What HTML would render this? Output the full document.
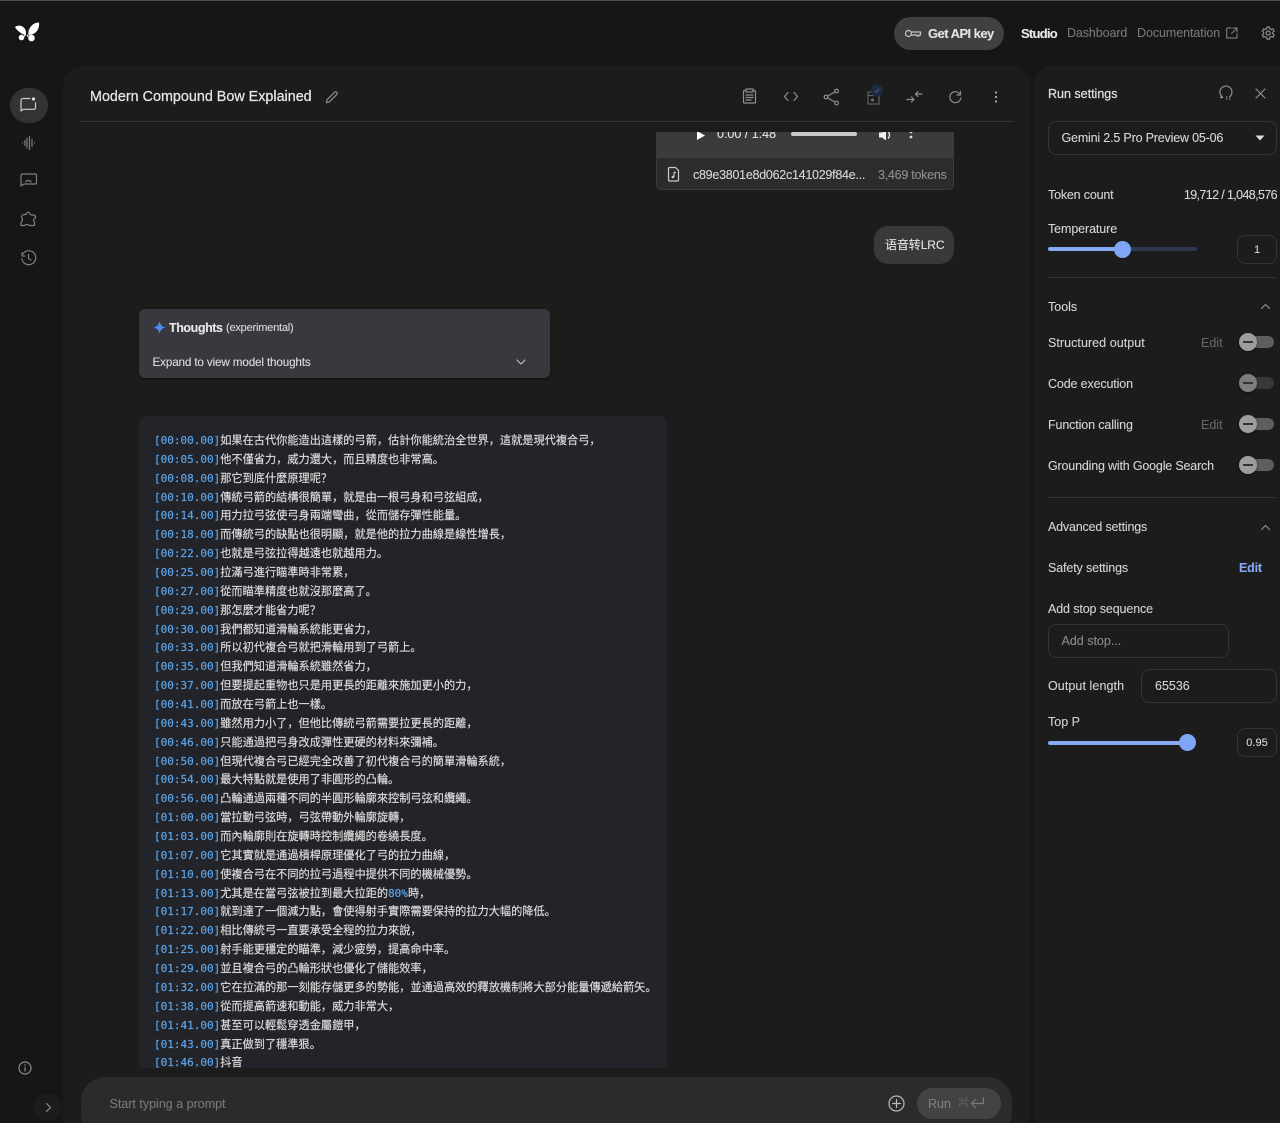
<!DOCTYPE html>
<html lang="zh"><head><meta charset="utf-8"><title>Modern Compound Bow Explained</title>
<style>
html,body{margin:0;padding:0;background:#161616;width:1280px;height:1123px;overflow:hidden}
#wrap{width:1280px;height:1123px;position:relative;overflow:hidden;font-family:"Liberation Sans","Noto Sans CJK SC",sans-serif;color:#d8d8d8;font-size:12.5px;-webkit-text-stroke:.1px}
.a{position:absolute}
.t{position:absolute;white-space:nowrap;line-height:16px}
svg{position:absolute;overflow:visible}
.i{fill:none;stroke:#8e8e8e;stroke-width:1.2;stroke-linecap:round;stroke-linejoin:round}
.box{position:absolute;box-sizing:border-box;border:1px solid #323335;border-radius:8px}
.tr{position:absolute;left:1240px;width:34px;height:12px;border-radius:6px;background:#5e5e5e}
.th{position:absolute;left:1239px;width:18px;height:18px;border-radius:50%;background:#9d9d9d;box-shadow:0 1px 2px rgba(0,0,0,.5)}
.th:after{content:"";position:absolute;left:4px;top:8px;width:10px;height:2px;background:#333}
#code{position:absolute;left:154px;top:431px;width:510px;font-size:11.2px;color:#dedede;font-family:"Noto Sans CJK SC",sans-serif;-webkit-text-stroke:.15px}
#code div{height:18.86px;line-height:18.86px;white-space:nowrap}
#code b{font-weight:400;font-size:11px;line-height:1;color:#5ca4ea;font-family:"DejaVu Sans Mono",monospace;-webkit-text-stroke:.2px}
</style></head><body><div id="wrap">
<div class="a" style="left:0;top:0;width:1280px;height:1px;background:#4a4a4a"></div>

<!-- logo -->
<svg style="left:0;top:0" width="60" height="60"><g fill="#fff">
<path d="M15 27c3-2.500 8-1.500 10 2 1 2 1.300 4 .8 6-3-.5-5.500-2-7.500-4-1.500-1.300-2.500-2.500-3.300-4z"/>
<path d="M39 22.500c.5 3.500-.5 7.500-3.500 10-2 1.700-4.500 2.500-7 2.500-.5-3.500.5-7 3.500-9.800 2-1.800 4.500-2.700 7-2.700z"/>
<circle cx="21.500" cy="37.500" r="2.800"/><circle cx="31.500" cy="38" r="3.300"/>
<path d="M25 33l-1.500 4 2-1zM28 34l.5 3-2-1z"/></g></svg>

<!-- sidebar -->
<div class="a" style="left:9.500px;top:88px;width:38px;height:35px;border-radius:18px;background:#333"></div>
<svg style="left:0;top:0" width="60" height="280">
<g class="i" style="stroke:#cfcfcf">
<path d="M30 98.500h-7a2 2 0 0 0-2 2v10.500l2.300-1.700h10.700a1.500 1.500 0 0 0 1.500-1.500v-5"/>
</g><circle cx="33.500" cy="99" r="1.600" fill="#ddd"/>
<g class="i" style="stroke:#7e7e7e" stroke-width="1.100"><path d="M22.500 143h0M25 140.500v5M27 138v10M29.500 136.500v13M32 139.500v7M34.500 143h0"/>
<path d="M22.500 174h13a1 1 0 0 1 1 1v8a1 1 0 0 1-1 1H24l-3 2v-10.500a1.500 1.500 0 0 1 1.500-1.500z"/>
<path d="M25.500 182l2-2 1.300 1.300 1-1 1.700 1.700" stroke-width="1"/>
<path d="M26 214.500h-1.500c-1.500 0-3 1-3 2.500s1.500 1.500 1 3-1.500 1.500-1.500 3v2.500h3c1.500 0 1.500-1 3-1s1.500 1 3 1h4.500v-3c0-1-1-1-1-2.500s1.500-1 2-2.500c.3-1.500-1-2.500-2-2.500h-2.500c-.8 0-.8-2.500-2.800-2.800-2-.2-1.700 2.300-2.700 2.300z"/>
<path d="M22.500 254.500a7 7 0 1 1-.7 4.300M22 253v3h3M28.500 254.500v4l2.500 1.500"/></g>
</svg>
<svg style="left:18px;top:1061px" width="14" height="14"><circle class="i" cx="7" cy="7" r="6"/><path class="i" d="M7 6.500v3.500M7 3.800v.6"/></svg>
<div class="a" style="left:34px;top:1093px;width:28px;height:28px;border-radius:50%;background:#1c1c1c"></div>
<svg style="left:44px;top:1102px" width="10" height="12"><path class="i" d="M2.500 1.500l4 4-4 4"/></svg>

<!-- header right -->
<div class="a" style="left:894px;top:17px;width:110px;height:33px;border-radius:17px;background:#404040"></div>
<svg style="left:905px;top:28px" width="16" height="12"><g class="i" stroke-width="1.100" style="stroke:#c8c8c8"><circle cx="3.500" cy="5.500" r="3"/><path d="M6.500 4h9v3h-1.500v1h-2v-1h-5.500"/></g></svg>
<div class="t" style="left:928px;top:26px;font-size:13px;font-weight:700;color:#e4e4e4;letter-spacing:-.55px">Get API key</div>
<div class="t" style="left:1021px;top:26px;font-size:13px;font-weight:700;color:#e8e8e8;letter-spacing:-.75px">Studio</div>
<div class="t" style="left:1067px;top:25px;font-size:12.500px;color:#767676;letter-spacing:-.1px">Dashboard</div>
<div class="t" style="left:1137px;top:25px;font-size:12.500px;color:#767676;letter-spacing:-.07px">Documentation</div>
<svg style="left:1226px;top:27px" width="12" height="12"><path class="i" style="stroke:#777" d="M5 1H1.500a.8.800 0 0 0-.8.800v8.400a.8.800 0 0 0 .8.800h8.700a.8.800 0 0 0 .8-.8V7M7 1h4v4M11 1L5.500 6.500"/></svg>
<svg style="left:1261px;top:26px" width="15" height="15"><g class="i" stroke="#999"><path d="M6 1h2.500l.4 1.800 1.300.7 1.800-.6 1.200 2.100-1.400 1.300v1.500l1.400 1.300-1.200 2.100-1.800-.6-1.300.7-.4 1.800H6l-.4-1.800-1.300-.7-1.800.6L1.300 9.100l1.400-1.300V6.300L1.300 5l1.200-2.100 1.800.6 1.300-.7z"/><circle cx="7.250" cy="7" r="2"/></g></svg>

<!-- main panel -->
<div class="a" style="left:63px;top:66px;width:967px;height:1070px;border-radius:20px 20px 0 0;background:#1c1c1c"></div>
<div class="t" style="left:90px;top:88px;font-size:14.35px;line-height:18px;color:#e6e6e6;-webkit-text-stroke:.25px #e6e6e6">Modern Compound Bow Explained</div>
<svg style="left:325px;top:90px" width="14" height="14"><path class="i" d="M1.500 12.700l.6-3 7.600-7.600c.5-.5 1.300-.5 1.800 0l.4.400c.5.500.5 1.300 0 1.800l-7.600 7.600z"/></svg>
<div class="a" style="left:80px;top:121px;width:934px;height:1px;background:#333"></div>

<!-- toolbar -->
<svg style="left:735px;top:85px" width="275" height="24"><g class="i" stroke-width="1.100">
<path d="M11 5.500H9.500a1 1 0 0 0-1 1v10.500a1 1 0 0 0 1 1h10a1 1 0 0 0 1-1V6.500a1 1 0 0 0-1-1H18M11 4h7v3h-7zM11 10h7M11 12.500h7M11 15h5"/>
<path d="M53 7.500L49.500 11.500 53 15.500M59 7.500l3.500 4-3.500 4"/>
<circle cx="101.500" cy="6" r="1.800"/><circle cx="91" cy="12" r="1.800"/><circle cx="101.500" cy="18" r="1.800"/><path d="M92.800 11l7-4M92.800 13l7 4"/>
<path style="stroke:#5e5e5e" d="M138 7h-5v12h11v-9"/><path style="stroke:#5e5e5e" d="M133 10.500h5"/>
</g><circle cx="137.500" cy="15" r="1.500" fill="#707070"/>
<circle cx="142" cy="5.500" r="6" fill="#1e2a42"/><path d="M139.500 5.500l1.800 1.800 3-3.300" fill="none" stroke="#526079" stroke-width="1"/>
<g class="i" stroke-width="1.100"><path d="M172 14.500h7M176.500 12l2.500 2.500-2.500 2.500M187 9h-6.500M183 6.500L180.500 9l2.500 2.500"/>
<path d="M225 9.200a5.500 5.500 0 1 0 .8 3.800M225.500 6.500v3.500h-3.500"/></g>
<g fill="#aaa"><circle cx="261" cy="7.500" r="1.100"/><circle cx="261" cy="12" r="1.100"/><circle cx="261" cy="16.500" r="1.100"/></g></svg>

<!-- audio card -->
<div class="a" style="left:656px;top:132px;width:298px;height:58px;overflow:hidden;box-sizing:border-box;border:1px solid #3a3b3d;border-top:0;border-radius:0 0 5px 5px;background:#2b2c2e">
<div class="a" style="left:0;top:0;width:298px;height:26px;background:#3b3b3d"></div>
<svg style="left:39px;top:-2px" width="12" height="12"><path d="M1 1l8 4.500-8 4.500z" fill="#fff"/></svg>
<div class="t" style="left:60px;top:-6px;font-size:12.500px;color:#e4e4e4">0:00 / 1:48</div>
<div class="a" style="left:134px;top:0;width:66px;height:4px;border-radius:2px;background:#c9c9c9"></div>
<svg style="left:221px;top:-3px" width="14" height="14"><path d="M1 3.500h3l4-3v11l-4-3H1z" fill="#eee"/><path d="M10 2.500c2 2 2 5 0 7" fill="none" stroke="#eee" stroke-width="1.300"/></svg>
<svg style="left:251px;top:-2px" width="6" height="14"><g fill="#ddd"><circle cx="3" cy="2" r="1.400"/><circle cx="3" cy="7" r="1.400"/></g></svg>
<svg style="left:10px;top:34px" width="14" height="16"><path class="i" style="stroke:#ccc" d="M1.500 2.500a1 1 0 0 1 1-1h6l3 3v9.500a1 1 0 0 1-1 1h-8a1 1 0 0 1-1-1z"/><path d="M7 6v5M7 6l2 .8" fill="none" stroke="#ccc" stroke-width="1.100"/><circle cx="5.800" cy="11" r="1.300" fill="#ccc"/></svg>
<div class="t" style="left:36px;top:35px;font-size:12.500px;color:#d9d9d9;letter-spacing:-.26px">c89e3801e8d062c141029f84e...</div>
<div class="t" style="left:221px;top:35px;font-size:12.500px;color:#8f8f8f;letter-spacing:-.25px">3,469 tokens</div>
</div>

<!-- bubble -->
<div class="a" style="left:874px;top:226px;width:80px;height:38px;border-radius:14px;background:#38393a"></div>
<div class="t" style="left:885px;top:237px;font-size:12px;color:#e4e4e4;letter-spacing:-.1px">语音转LRC</div>

<!-- thoughts -->
<div class="a" style="left:139px;top:309px;width:411px;height:69px;border-radius:6px;background:#38393e;box-shadow:0 1px 2px rgba(0,0,0,.5)"></div>
<svg style="left:153px;top:321px" width="13" height="13"><path d="M6.500 0c.6 3.700 2.500 5.800 6 6.500-3.500.7-5.400 2.800-6 6.500-.6-3.700-2.500-5.800-6-6.500 3.500-.7 5.400-2.800 6-6.500z" fill="#4a8df0"/></svg>
<div class="t" style="left:169px;top:320px;font-size:12.500px;font-weight:700;color:#e8e8e8;letter-spacing:-.42px">Thoughts</div>
<div class="t" style="left:226px;top:320px;font-size:11px;color:#dcdcdc;letter-spacing:-.2px">(experimental)</div>
<div class="t" style="left:152.500px;top:355px;font-size:11.700px;color:#dedede;letter-spacing:-.15px">Expand to view model thoughts</div>
<svg style="left:515px;top:357px" width="12" height="10"><path class="i" style="stroke:#bbb" stroke-width="1" d="M2 3l4 4 4-4"/></svg>

<!-- code -->
<div class="a" style="left:139px;top:416px;width:528px;height:652px;border-radius:8px 8px 0 0;background:#222429"></div>
<div id="code">
<div><b>[00:00.00]</b>如果在古代你能造出這樣的弓箭&#xFF0C;估計你能統治全世界&#xFF0C;這就是現代複合弓&#xFF0C;</div>
<div><b>[00:05.00]</b>他不僅省力&#xFF0C;威力還大&#xFF0C;而且精度也非常高。</div>
<div><b>[00:08.00]</b>那它到底什麼原理呢&#xFF1F;</div>
<div><b>[00:10.00]</b>傳統弓箭的結構很簡單&#xFF0C;就是由一根弓身和弓弦組成&#xFF0C;</div>
<div><b>[00:14.00]</b>用力拉弓弦使弓身兩端彎曲&#xFF0C;從而儲存彈性能量。</div>
<div><b>[00:18.00]</b>而傳統弓的缺點也很明顯&#xFF0C;就是他的拉力曲線是線性增長&#xFF0C;</div>
<div><b>[00:22.00]</b>也就是弓弦拉得越遠也就越用力。</div>
<div><b>[00:25.00]</b>拉滿弓進行瞄準時非常累&#xFF0C;</div>
<div><b>[00:27.00]</b>從而瞄準精度也就沒那麼高了。</div>
<div><b>[00:29.00]</b>那怎麼才能省力呢&#xFF1F;</div>
<div><b>[00:30.00]</b>我們都知道滑輪系統能更省力&#xFF0C;</div>
<div><b>[00:33.00]</b>所以初代複合弓就把滑輪用到了弓箭上。</div>
<div><b>[00:35.00]</b>但我們知道滑輪系統雖然省力&#xFF0C;</div>
<div><b>[00:37.00]</b>但要提起重物也只是用更長的距離來施加更小的力&#xFF0C;</div>
<div><b>[00:41.00]</b>而放在弓箭上也一樣。</div>
<div><b>[00:43.00]</b>雖然用力小了&#xFF0C;但他比傳統弓箭需要拉更長的距離&#xFF0C;</div>
<div><b>[00:46.00]</b>只能通過把弓身改成彈性更硬的材料來彌補。</div>
<div><b>[00:50.00]</b>但現代複合弓已經完全改善了初代複合弓的簡單滑輪系統&#xFF0C;</div>
<div><b>[00:54.00]</b>最大特點就是使用了非圓形的凸輪。</div>
<div><b>[00:56.00]</b>凸輪通過兩種不同的半圓形輪廓來控制弓弦和纜繩。</div>
<div><b>[01:00.00]</b>當拉動弓弦時&#xFF0C;弓弦帶動外輪廓旋轉&#xFF0C;</div>
<div><b>[01:03.00]</b>而內輪廓則在旋轉時控制纜繩的卷繞長度。</div>
<div><b>[01:07.00]</b>它其實就是通過槓桿原理優化了弓的拉力曲線&#xFF0C;</div>
<div><b>[01:10.00]</b>使複合弓在不同的拉弓過程中提供不同的機械優勢。</div>
<div><b>[01:13.00]</b>尤其是在當弓弦被拉到最大拉距的<b>80%</b>時&#xFF0C;</div>
<div><b>[01:17.00]</b>就到達了一個減力點&#xFF0C;會使得射手實際需要保持的拉力大幅的降低。</div>
<div><b>[01:22.00]</b>相比傳統弓一直要承受全程的拉力來說&#xFF0C;</div>
<div><b>[01:25.00]</b>射手能更穩定的瞄準&#xFF0C;減少疲勞&#xFF0C;提高命中率。</div>
<div><b>[01:29.00]</b>並且複合弓的凸輪形狀也優化了儲能效率&#xFF0C;</div>
<div><b>[01:32.00]</b>它在拉滿的那一刻能存儲更多的勢能&#xFF0C;並通過高效的釋放機制將大部分能量傳遞給箭矢。</div>
<div><b>[01:38.00]</b>從而提高箭速和動能&#xFF0C;威力非常大&#xFF0C;</div>
<div><b>[01:41.00]</b>甚至可以輕鬆穿透金屬鎧甲&#xFF0C;</div>
<div><b>[01:43.00]</b>真正做到了穩準狠。</div>
<div><b>[01:46.00]</b>抖音</div>
</div>
<div class="a" style="left:63px;top:1068px;width:967px;height:60px;background:#1c1c1c"></div>

<!-- prompt -->
<div class="a" style="left:81px;top:1077px;width:931px;height:60px;border-radius:24px;background:#2b2b2b"></div>
<div class="t" style="left:109.500px;top:1096px;font-size:12.500px;color:#787878">Start typing a prompt</div>
<svg style="left:888px;top:1095px" width="17" height="17"><circle class="i" style="stroke:#bbb" cx="8.500" cy="8.500" r="7.500"/><path class="i" style="stroke:#bbb" d="M8.500 4.500v8M4.500 8.500h8"/></svg>
<div class="a" style="left:917px;top:1088px;width:84px;height:31px;border-radius:16px;background:#434343"></div>
<div class="t" style="left:928px;top:1096px;font-size:12.500px;color:#7d7d7d">Run</div>
<div class="t" style="left:958.500px;top:1096px;font-size:10px;color:#707070">⌘</div>
<svg style="left:970px;top:1096px" width="15" height="14"><path class="i" style="stroke:#7a7a7a" stroke-width="1.500" d="M13.500 2v5.500H2M5.500 3.500L1.500 7.500l4 4"/></svg>

<!-- right panel -->
<div class="a" style="left:1034px;top:66px;width:260px;height:1070px;border-radius:18px 0 0 0;background:#1c1c1c"></div>
<div class="t" style="left:1048px;top:85.500px;font-size:12.500px;color:#e0e0e0;-webkit-text-stroke:.2px #e0e0e0">Run settings</div>
<svg style="left:1219px;top:86px" width="14" height="15"><path class="i" d="M3.500 11a6 6 0 1 1 7.500-.5"/><path d="M1 11.500h3M7 11h1.200M10 11h1.200M7 13h1.200M10 13h1.200" stroke="#9a9a9a" stroke-width="1.200"/></svg>
<svg style="left:1255px;top:88px" width="11" height="11"><path class="i" d="M1 1l9 9M10 1l-9 9"/></svg>
<div class="box" style="left:1048px;top:121px;width:229px;height:34px"></div>
<div class="t" style="left:1061.500px;top:130px;font-size:12.500px;color:#d8d8d8;letter-spacing:-.18px">Gemini 2.5 Pro Preview 05-06</div>
<svg style="left:1255px;top:135px" width="10" height="6"><path d="M.5 0.500h9L5 5.500z" fill="#ddd"/></svg>

<div class="t" style="left:1048px;top:187px;color:#d4d4d4;letter-spacing:-.18px">Token count</div>
<div class="t" style="right:3px;top:187px;color:#d8d8d8;letter-spacing:-.62px">19,712 / 1,048,576</div>
<div class="t" style="left:1048px;top:221px;color:#d4d4d4;letter-spacing:-.1px">Temperature</div>
<div class="a" style="left:1048px;top:247px;width:149px;height:4px;border-radius:2px;background:#2e3a52"></div>
<div class="a" style="left:1048px;top:247px;width:74px;height:4px;border-radius:2px;background:#86a8f5"></div>
<div class="a" style="left:1114px;top:241px;width:17px;height:17px;border-radius:50%;background:#7fa5f7"></div>
<div class="box" style="left:1237px;top:235px;width:40px;height:29px"></div>
<div class="t" style="left:1237px;width:40px;top:242px;text-align:center;font-size:11px;color:#d8d8d8">1</div>
<div class="a" style="left:1048px;top:277px;width:229px;height:1px;background:#333"></div>

<div class="t" style="left:1048px;top:299px;color:#d4d4d4">Tools</div>
<svg style="left:1260px;top:303px" width="11" height="7"><path class="i" d="M1.500 5.500l4-4 4 4"/></svg>
<div class="t" style="left:1048px;top:335px;color:#d4d4d4;letter-spacing:.05px">Structured output</div>
<div class="t" style="left:1201px;top:335px;color:#666">Edit</div>
<div class="tr" style="top:336px"></div><div class="th" style="top:333px"></div>
<div class="t" style="left:1048px;top:376px;color:#d4d4d4;letter-spacing:-.14px">Code execution</div>
<div class="tr" style="top:377px;background:#383838"></div><div class="th" style="top:374px;background:#7d7d7d"></div>
<div class="t" style="left:1048px;top:417px;color:#d4d4d4;letter-spacing:-.13px">Function calling</div>
<div class="t" style="left:1201px;top:417px;color:#666">Edit</div>
<div class="tr" style="top:418px"></div><div class="th" style="top:415px"></div>
<div class="t" style="left:1048px;top:458px;color:#d4d4d4;letter-spacing:-.18px">Grounding with Google Search</div>
<div class="tr" style="top:459px"></div><div class="th" style="top:456px"></div>
<div class="a" style="left:1048px;top:497px;width:229px;height:1px;background:#333"></div>

<div class="t" style="left:1048px;top:519px;color:#d4d4d4;letter-spacing:-.18px">Advanced settings</div>
<svg style="left:1260px;top:524px" width="11" height="7"><path class="i" d="M1.500 5.500l4-4 4 4"/></svg>
<div class="t" style="left:1048px;top:560px;color:#d4d4d4;letter-spacing:-.13px">Safety settings</div>
<div class="t" style="left:1239px;top:560px;color:#83a9f5;font-weight:700;letter-spacing:-.2px">Edit</div>
<div class="t" style="left:1048px;top:601px;color:#d4d4d4;letter-spacing:-.12px">Add stop sequence</div>
<div class="box" style="left:1048px;top:624px;width:181px;height:34px"></div>
<div class="t" style="left:1061.500px;top:633px;color:#8a8a8a">Add stop...</div>
<div class="t" style="left:1048px;top:678px;color:#d4d4d4;letter-spacing:.08px">Output length</div>
<div class="box" style="left:1141px;top:669px;width:136px;height:34px"></div>
<div class="t" style="left:1155px;top:678px;color:#d4d4d4">65536</div>
<div class="t" style="left:1048px;top:714px;color:#d4d4d4">Top P</div>
<div class="a" style="left:1048px;top:741px;width:139px;height:4px;border-radius:2px;background:#86a8f5"></div>
<div class="a" style="left:1178.500px;top:734px;width:17px;height:17px;border-radius:50%;background:#7fa5f7"></div>
<div class="box" style="left:1237px;top:728px;width:40px;height:29px"></div>
<div class="t" style="left:1237px;width:40px;top:735px;text-align:center;font-size:11px;color:#d8d8d8">0.95</div>
</div></body></html>
